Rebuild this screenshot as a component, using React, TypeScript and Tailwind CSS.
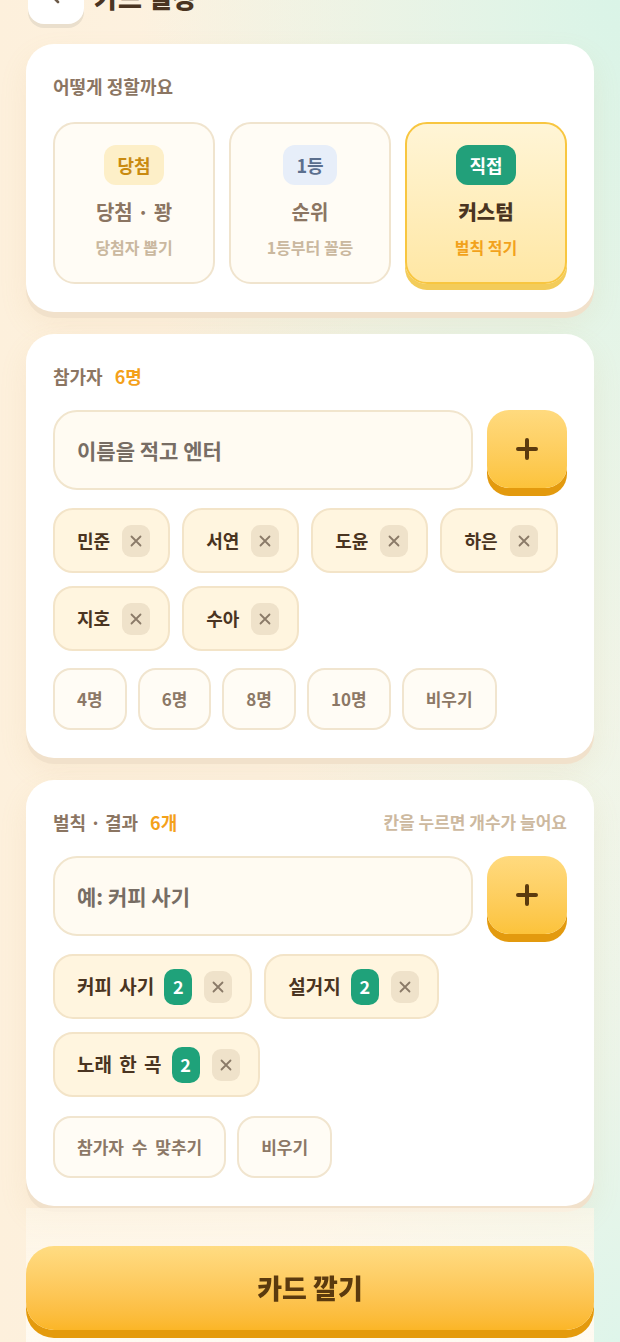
import React from "react";

const XIcon = () => (
  <svg width="14" height="14" viewBox="0 0 14 14" fill="none">
    <path d="M2.5 2.5L11.5 11.5M11.5 2.5L2.5 11.5" stroke="#8a7a68" strokeWidth="1.8" strokeLinecap="round" />
  </svg>
);

const PlusIcon = () => (
  <svg width="22" height="22" viewBox="0 0 22 22" fill="none">
    <path d="M11 2V20M2 11H20" stroke="#5b3a0e" strokeWidth="4" strokeLinecap="round" />
  </svg>
);

function XBtn() {
  return (
    <span className="ml-[2px] flex h-[32px] w-[28px] items-center justify-center rounded-[9px] bg-[#efe2ca]">
      <XIcon />
    </span>
  );
}

function NameChip({ name }: { name: string }) {
  return (
    <div className="flex h-[65px] items-center gap-[10px] rounded-[20px] border-2 border-[#f3e4c8] bg-[#fff5df] pl-[22px] pr-[18px]">
      <span className="text-[18px] font-bold text-[#4a3421]">{name}</span>
      <XBtn />
    </div>
  );
}

function RuleChip({ name, count }: { name: string; count: number }) {
  return (
    <div className="flex h-[65px] items-center gap-[10px] rounded-[20px] border-2 border-[#f3e4c8] bg-[#fff5df] pl-[22px] pr-[18px]">
      <span className="text-[19px] font-bold text-[#4a3421] [word-spacing:3px]">{name}</span>
      <span className="flex h-[36px] w-[28px] items-center justify-center rounded-[10px] bg-[#1fa27a] text-[18px] font-bold text-white">
        {count}
      </span>
      <XBtn />
    </div>
  );
}

function QuickBtn({ label }: { label: string }) {
  return (
    <button className="flex h-[62px] items-center rounded-[18px] border-2 border-[#f1e5cf] bg-[#fffcf5] px-[22px] text-[17px] font-bold text-[#8c7866] [word-spacing:4px]">
      {label}
    </button>
  );
}

function InputRow({ placeholder }: { placeholder: string }) {
  return (
    <div className="mt-[20px] flex gap-[14px]">
      <input
        placeholder={placeholder}
        className="h-[80px] min-w-0 flex-1 rounded-[24px] border-2 border-[#f1e5cd] bg-[#fffbf2] px-[22px] text-[21px] font-bold text-[#4a3421] outline-none placeholder:text-[#776d64]"
      />
      <button className="flex h-[78px] w-[80px] items-center justify-center rounded-[22px] bg-linear-to-b from-[#ffda7e] to-[#fcc33a] shadow-[0_8px_0_#e39a0e]">
        <PlusIcon />
      </button>
    </div>
  );
}

const cardCls =
  "rounded-[28px] bg-white px-[27px] pt-[28px] pb-[28px] shadow-[0_6px_0_#f1e1cb,0_12px_28px_rgba(210,170,110,0.12)]";

export default function App() {
  return (
    <div className="min-h-screen bg-[radial-gradient(ellipse_at_100%_0%,#d9f4e7_0%,rgba(217,244,231,0)_55%),radial-gradient(ellipse_at_100%_100%,#ddf5ea_0%,rgba(221,245,234,0)_35%),linear-gradient(90deg,#fdf0dc,#fdf5e8)] font-['Noto_Sans_CJK_KR','Noto_Sans',sans-serif]">
      <div className="mx-auto w-[620px] px-[26px] pb-[170px]">
        <header className="-mt-[32px] flex h-[56px] items-center gap-[10px] pl-[2px]">
          <button className="flex h-[56px] w-[56px] items-center justify-center rounded-[16px] bg-white shadow-[0_4px_0_#eadfcd]">
            <svg width="18" height="18" viewBox="0 0 18 18" fill="none">
              <path d="M11 3L5 9L11 15" stroke="#6b5a48" strokeWidth="2.6" strokeLinecap="round" strokeLinejoin="round" />
            </svg>
          </button>
          <h1 className="text-[26px] font-extrabold text-[#4a3421]">카드 설정</h1>
        </header>

        {/* Mode */}
        <section className={`mt-[20px] ${cardCls}`}>
          <div className="flex h-[28px] items-center text-[18px] font-bold text-[#8b7562]">어떻게 정할까요</div>
          <div className="mt-[22px] grid grid-cols-3 gap-[14px]">
            <div className="flex h-[162px] flex-col items-center rounded-[22px] border-2 border-[#f0e4ce] bg-[#fffcf5] pt-[21px]">
              <span className="flex h-[40px] items-center rounded-[12px] bg-[#fdefc8] px-[13px] text-[18px] font-bold text-[#c98a10]">당첨</span>
              <span className="mt-[14px] text-[20px] leading-[26px] font-bold text-[#8b7562]">당첨 · 꽝</span>
              <span className="mt-[12px] text-[16px] leading-[20px] font-bold text-[#cab89f]">당첨자 뽑기</span>
            </div>
            <div className="flex h-[162px] flex-col items-center rounded-[22px] border-2 border-[#f0e4ce] bg-[#fffcf5] pt-[21px]">
              <span className="flex h-[40px] items-center rounded-[12px] bg-[#e7eef9] px-[13px] text-[18px] font-bold text-[#5b6f8e]">1등</span>
              <span className="mt-[14px] text-[20px] leading-[26px] font-bold text-[#8b7562]">순위</span>
              <span className="mt-[12px] text-[16px] leading-[20px] font-bold text-[#cab89f]">1등부터 꼴등</span>
            </div>
            <div className="flex h-[162px] flex-col items-center rounded-[22px] border-2 border-[#f8c640] bg-linear-to-b from-[#fff5d6] to-[#ffe7a4] pt-[21px] shadow-[0_6px_0_#f3cc5a]">
              <span className="flex h-[40px] items-center rounded-[12px] bg-[#22a07a] px-[13px] text-[18px] font-bold text-white">직접</span>
              <span className="mt-[14px] text-[20px] leading-[26px] font-extrabold text-[#4a3421]">커스텀</span>
              <span className="mt-[12px] text-[16px] leading-[20px] font-bold text-[#f2a21c]">벌칙 적기</span>
            </div>
          </div>
        </section>

        {/* Participants */}
        <section className={`mt-[22px] ${cardCls}`}>
          <div className="flex h-[28px] items-center gap-[12px] text-[18px] font-bold text-[#8b7562]">
            <span>참가자</span>
            <span className="text-[#f4a11b]">6명</span>
          </div>
          <InputRow placeholder="이름을 적고 엔터" />
          <div className="mt-[18px] flex flex-wrap gap-x-[12px] gap-y-[13px]">
            {["민준", "서연", "도윤", "하은", "지호", "수아"].map((n) => (
              <NameChip key={n} name={n} />
            ))}
          </div>
          <div className="mt-[17px] flex gap-[11px]">
            {["4명", "6명", "8명", "10명", "비우기"].map((l) => (
              <QuickBtn key={l} label={l} />
            ))}
          </div>
        </section>

        {/* Rules */}
        <section className={`mt-[22px] ${cardCls}`}>
          <div className="flex h-[28px] items-center justify-between">
            <div className="flex items-center gap-[12px] text-[18px] font-bold text-[#8b7562]">
              <span>벌칙 · 결과</span>
              <span className="text-[#f4a11b]">6개</span>
            </div>
            <span className="text-[17px] font-bold text-[#cdb99f]">칸을 누르면 개수가 늘어요</span>
          </div>
          <InputRow placeholder="예: 커피 사기" />
          <div className="mt-[18px] flex flex-wrap gap-x-[12px] gap-y-[13px]">
            <RuleChip name="커피 사기" count={2} />
            <RuleChip name="설거지" count={2} />
            <RuleChip name="노래 한 곡" count={2} />
          </div>
          <div className="mt-[19px] flex gap-[11px]">
            <QuickBtn label="참가자 수 맞추기" />
            <QuickBtn label="비우기" />
          </div>
        </section>
      </div>

      <div className="fixed bottom-0 left-[26px] w-[568px] bg-linear-to-b from-[#fdf6e8]/70 to-[#fffaf1] pt-[38px] pb-[12px]">
        <button className="flex h-[84px] w-full items-center justify-center rounded-[28px] bg-linear-to-b from-[#ffdc82] to-[#fbb626] text-[27px] font-extrabold text-[#5b3a0e] shadow-[0_8px_0_#e49a0c]">
          카드 깔기
        </button>
      </div>
    </div>
  );
}
